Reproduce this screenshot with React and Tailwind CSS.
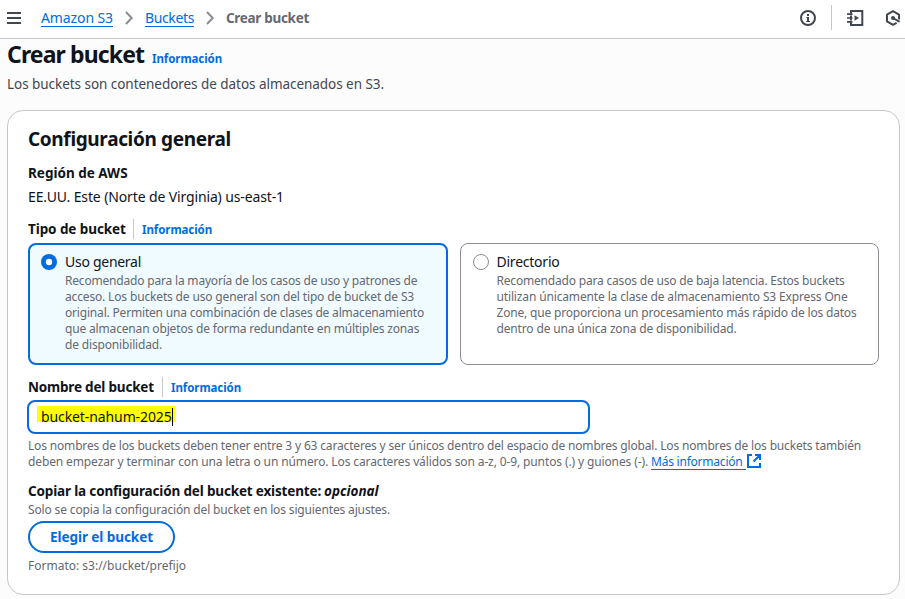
const Info = ({ className = "" }) => (
  <a className={`text-[11.5px] font-bold leading-5 tracking-[-0.07px] text-[#006ce0] ${className}`}>Información</a>
);

const Chevron = () => (
  <svg width="16" height="16" viewBox="0 0 16 16" fill="none" stroke="#8c8c94" strokeWidth="2" className="mt-px shrink-0">
    <path d="M5 2l5.700 6L5 14" />
  </svg>
);

function Header() {
  return (
    <header className="flex h-[39px] shrink-0 items-center border-b border-[#c6c6cd] bg-white pb-[3px] pl-[7px]">
      <svg className="mt-px" width="14" height="12" viewBox="0 0 14 12" fill="none" stroke="#424650" strokeWidth="2">
        <path d="M0 1h14M0 6h14M0 11h14" />
      </svg>
      <a className="ml-5 h-[19px] w-[72px] border-b border-[#006ce0] leading-[19px] tracking-[-0.1px] text-[#006ce0]">Amazon S3</a>
      <span className="ml-2 flex w-4"><Chevron /></span>
      <a className="ml-2 h-[19px] w-[49px] border-b border-[#006ce0] leading-[19px] tracking-[-0.37px] text-[#006ce0]">Buckets</a>
      <span className="ml-2 flex w-4"><Chevron /></span>
      <span className="ml-2 mt-px text-[13.5px] font-bold leading-5 tracking-[-0.31px] text-[#656871]">Crear bucket</span>
      <div className="ml-auto flex items-center">
        <svg className="mt-px" width="16" height="16" viewBox="0 0 16 16" fill="none">
          <circle cx="8" cy="8" r="7" stroke="#424650" strokeWidth="2" />
          <path d="M7 4h2v2H7zM6.300 7H9v4h1v1H6.300v-1H7V8h-.7z" fill="#424650" />
        </svg>
        <div className="ml-[15px] h-[25px] w-px bg-[#c6c6cd]" />
        <svg className="ml-[15px] mt-px" width="17" height="16" viewBox="0 0 17 16" fill="none" stroke="#424650" strokeWidth="2">
          <path d="M4 3.500V1h11.300v14H4v-2.500M4 5.500v5" />
          <path d="M0 4.200h5.500M0 8h5.500M0 11.800h5.500" strokeWidth="1.7" />
          <path d="M7.500 5.200v5.600L12 8z" fill="#424650" stroke="none" />
        </svg>
        <svg className="ml-[21px] mr-[4px] mt-px" width="16" height="16" viewBox="0 0 16 16" fill="none" stroke="#424650" strokeWidth="2">
          <path d="M14 9.500V4.600L8 1.200 2 4.600v6.800l6 3.400 3.600-2" strokeLinejoin="round" />
          <path d="M8 8l6.600 3.800" />
          <circle cx="8" cy="8" r="2" fill="#424650" stroke="none" />
        </svg>
      </div>
    </header>
  );
}

function Radio({ checked }) {
  return checked ? (
    <svg className="shrink-0" width="16" height="16" viewBox="0 0 16 16">
      <circle cx="8" cy="8" r="8" fill="#006ce0" />
      <circle cx="8" cy="8" r="3.200" fill="#ffffff" />
    </svg>
  ) : (
    <span className="size-4 shrink-0 rounded-full border border-[#8c8c94] bg-white" />
  );
}

function Field({ label, children }) {
  return (
    <div className="flex h-5 items-center">
      {label}
      <span className="ml-[7px] mr-2 h-5 w-px bg-[#c6c6cd]" />
      {children}
    </div>
  );
}

export default function App() {
  return (
    <div className="flex h-[599px] w-[905px] flex-col overflow-hidden whitespace-nowrap bg-[#fcfcfd] font-['Noto_Sans',sans-serif] text-[14px] leading-5 text-[#0f141a]">
      <Header />
      <div className="flex h-[30px] items-baseline gap-2 pl-[7px]">
        <h1 className="w-[137px] text-[23px] font-bold leading-[30px] tracking-[-0.88px]">Crear bucket</h1>
        <Info />
      </div>
      <p className="mt-[5px] pl-[7px] text-[13.5px] tracking-[-0.045px] text-[#424650]">
        Los buckets son contenedores de datos almacenados en S3.
      </p>

      <main className="ml-[7px] mt-4 h-[485px] w-[893px] shrink-0 rounded-2xl border border-[#c6c6cd] bg-white px-5 pt-4">
        <h2 className="text-[19px] font-bold leading-6 tracking-[-0.35px]">Configuración general</h2>
        <div className="mt-3 text-[13.5px] font-bold">Región de AWS</div>
        <div className="mt-1 tracking-[-0.13px]">EE.UU. Este (Norte de Virginia) us-east-1</div>

        <div className="mt-3">
          <Field label={<span className="w-[98px] text-[13.5px] font-bold tracking-[-0.08px]">Tipo de bucket</span>}>
            <Info className="mt-[2px]" />
          </Field>
        </div>
        <div className="mt-1 flex gap-3">
          <div className="flex h-[122px] w-[420px] gap-2 rounded-lg border-2 border-[#006ce0] bg-[#f0fbff] pl-[11px] pt-[8px]">
            <span className="flex pt-px"><Radio checked /></span>
            <div>
              <div className="-mt-px mb-px leading-5 tracking-[-0.28px]">Uso general</div>
              <div className="text-[12px] leading-4 text-[#656871]">
                <div className="tracking-[-0.19px]">Recomendado para la mayoría de los casos de uso y patrones de</div>
                <div className="tracking-[-0.155px]">acceso. Los buckets de uso general son del tipo de bucket de S3</div>
                <div className="tracking-[-0.186px]">original. Permiten una combinación de clases de almacenamiento</div>
                <div className="tracking-[-0.165px]">que almacenan objetos de forma redundante en múltiples zonas</div>
                <div className="tracking-[-0.165px]">de disponibilidad.</div>
              </div>
            </div>
          </div>
          <div className="flex h-[122px] w-[419px] gap-2 rounded-lg border border-[#8c8c94] bg-white pl-[12px] pt-[9px]">
            <span className="flex pt-px"><Radio /></span>
            <div className="-ml-[0.5px]">
              <div className="-mt-px mb-px leading-5 tracking-[-0.23px]">Directorio</div>
              <div className="text-[12px] leading-4 text-[#656871]">
                <div className="tracking-[-0.19px]">Recomendado para casos de uso de baja latencia. Estos buckets</div>
                <div className="tracking-[-0.143px]">utilizan únicamente la clase de almacenamiento S3 Express One</div>
                <div className="tracking-[-0.184px]">Zone, que proporciona un procesamiento más rápido de los datos</div>
                <div className="tracking-[-0.155px]">dentro de una única zona de disponibilidad.</div>
              </div>
            </div>
          </div>
        </div>

        <div className="mt-3">
          <Field label={<span className="w-[127px] text-[13.5px] font-bold tracking-[-0.19px]">Nombre del bucket</span>}>
            <Info className="mt-[2px]" />
          </Field>
        </div>
        <div className="-ml-px mt-[3px] flex h-[34px] w-[563px] items-start rounded-lg border-2 border-[#006ce0] bg-white pl-2 pt-1">
          <div className="flex h-4 w-[138px] items-center bg-[#ffff00] pl-1">
            <span className="mt-[6px] w-[131px] tracking-[-0.1px]">bucket-nahum-2025</span>
            <span className="mt-[6px] h-[18px] w-px shrink-0 bg-black" />
          </div>
        </div>
        <div className="mt-1 text-[12px] leading-4 text-[#656871]">
          <div className="tracking-[-0.165px]">
            Los nombres de los buckets deben tener entre 3 y 63 caracteres y ser únicos dentro del espacio de nombres global. Los nombres de los buckets también
          </div>
          <div className="flex h-4">
            <span className="w-[623px] tracking-[-0.12px]">
              deben empezar y terminar con una letra o un número. Los caracteres válidos son a-z, 0-9, puntos (.) y guiones (-).
            </span>
            <a className="h-4 w-[95px] border-b border-[#006ce0] tracking-[-0.22px] text-[#006ce0]">Más información</a>
            <svg className="ml-px shrink-0" width="14" height="14" viewBox="0 0 14 14" fill="none" stroke="#006ce0" strokeWidth="2">
              <path d="M5 1H1v12h12V9M8 1h5v5M13 1L6.500 7.500" />
            </svg>
          </div>
        </div>

        <div className="mt-[11px] text-[13.5px] font-bold">
          <span className="inline-block w-[296px] tracking-[-0.16px]">Copiar la configuración del bucket existente:</span>
          <i>opcional</i>
        </div>
        <div className="mt-px text-[12px] leading-4 tracking-[-0.145px] text-[#656871]">
          Solo se copia la configuración del bucket en los siguientes ajustes.
        </div>
        <button className="mt-[3px] flex h-8 w-[147px] items-center justify-center rounded-full border-2 border-[#006ce0] bg-white text-[13.5px] font-bold tracking-[-0.06px] text-[#006ce0]">
          Elegir el bucket
        </button>
        <div className="mt-[5px] text-[12px] leading-4 text-[#656871]">Formato: s3://bucket/prefijo</div>
      </main>
    </div>
  );
}
